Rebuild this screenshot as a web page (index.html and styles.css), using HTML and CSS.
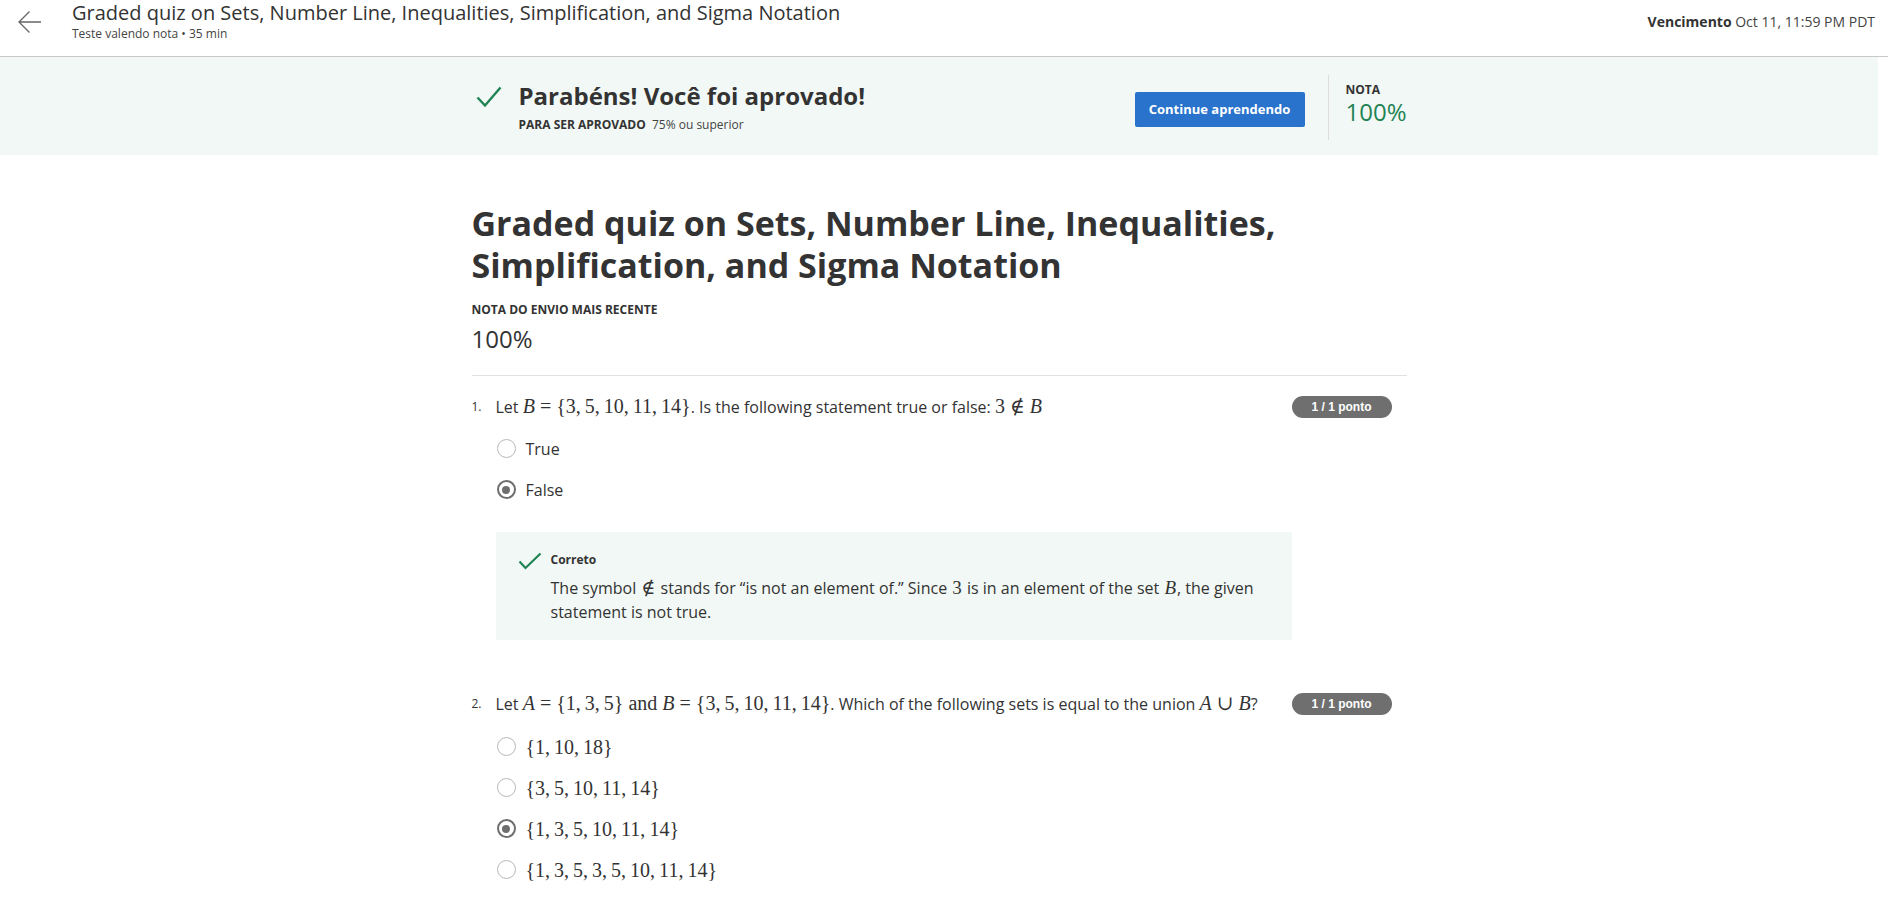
FILE: index.html
```html
<!DOCTYPE html>
<html lang="pt">
<head>
<meta charset="utf-8">
<title>Graded quiz</title>
<link rel="stylesheet" href="styles.css">
</head>
<body>
<header class="topbar">
  <div class="topbar-left">
    <svg class="back" width="24" height="24" viewBox="0 0 24 24" fill="none" stroke="#666" stroke-width="1.3"><path d="M23 12H1.5M11.5 1.5L1 12l10.5 10.5"/></svg>
    <div class="topbar-titles">
      <div class="topbar-title">Graded quiz on Sets, Number Line, Inequalities, Simplification, and Sigma Notation</div>
      <div class="topbar-sub">Teste valendo nota • 35 min</div>
    </div>
  </div>
  <div class="due"><b>Vencimento</b> Oct 11, 11:59 PM PDT</div>
</header>

<div class="page">
  <section class="banner">
    <div class="banner-inner">
      <div class="banner-left">
        <svg class="banner-check" width="26" height="22" viewBox="0 0 26 22" fill="none" stroke="#1f8354" stroke-width="2.4"><path d="M1.5 11.5l7.5 8L24.5 1.5"/></svg>
        <div>
          <div class="banner-title">Parabéns! Você foi aprovado!</div>
          <div class="banner-sub"><b>PARA SER APROVADO</b> 75% ou superior</div>
        </div>
      </div>
      <button class="btn">Continue aprendendo</button>
      <div class="grade">
        <div class="grade-label">NOTA</div>
        <div class="grade-value">100%</div>
      </div>
    </div>
  </section>

  <main class="content">
    <h1 class="quiz-title">Graded quiz on Sets, Number Line, Inequalities, Simplification, and Sigma Notation</h1>
    <div class="recent-label">NOTA DO ENVIO MAIS RECENTE</div>
    <div class="recent-value">100%</div>
    <hr class="divider">

    <div class="question">
      <div class="q-row">
        <span class="q-num">1.</span>
        <div class="q-text">Let <span class="m"><i>B</i> = {3,&thinsp;5,&thinsp;10,&thinsp;11,&thinsp;14}</span>. Is the following statement true or false: <span class="m">3 ∉ <i>B</i></span></div>
        <span class="badge">1 / 1 ponto</span>
      </div>
      <div class="options">
        <div class="opt"><span class="radio"></span><span>True</span></div>
        <div class="opt"><span class="radio on"></span><span>False</span></div>
      </div>
      <div class="feedback">
        <svg class="fb-check" width="24" height="18" viewBox="0 0 24 18" fill="none" stroke="#1f8354" stroke-width="2.2"><path d="M1.5 9.5l6 6.5L22.5 1.5"/></svg>
        <div class="fb-body">
          <div class="fb-label">Correto</div>
          <p class="fb-text">The symbol <span class="m fb-m">∉</span> stands for “is not an element of.” Since <span class="m fb-m">3</span> is in an element of the set <span class="m fb-m"><i>B</i></span>, the given statement is not true.</p>
        </div>
      </div>
    </div>

    <div class="question q2">
      <div class="q-row">
        <span class="q-num">2.</span>
        <div class="q-text">Let <span class="m"><i>A</i> = {1,&thinsp;3,&thinsp;5} and <i>B</i> = {3,&thinsp;5,&thinsp;10,&thinsp;11,&thinsp;14}</span>. Which of the following sets is equal to the union <span class="m"><i>A</i> ∪ <i>B</i></span>?</div>
        <span class="badge">1 / 1 ponto</span>
      </div>
      <div class="options">
        <div class="opt"><span class="radio"></span><span class="m">{1,&thinsp;10,&thinsp;18}</span></div>
        <div class="opt"><span class="radio"></span><span class="m">{3,&thinsp;5,&thinsp;10,&thinsp;11,&thinsp;14}</span></div>
        <div class="opt"><span class="radio on"></span><span class="m">{1,&thinsp;3,&thinsp;5,&thinsp;10,&thinsp;11,&thinsp;14}</span></div>
        <div class="opt"><span class="radio"></span><span class="m">{1,&thinsp;3,&thinsp;5,&thinsp;3,&thinsp;5,&thinsp;10,&thinsp;11,&thinsp;14}</span></div>
      </div>
    </div>
  </main>
</div>
</body>
</html>
```

FILE: styles.css
```css
* { box-sizing: border-box; }
html, body { margin: 0; padding: 0; }
body {
  font-family: "Open Sans", "Noto Sans", sans-serif;
  color: #333;
  background: #fff;
  overflow: hidden;
}

.topbar {
  height: 57px;
  border-bottom: 1px solid #c8c8c8;
  display: flex;
  justify-content: space-between;
  align-items: flex-start;
  padding: 0 13px 0 18px;
}
.topbar-left { display: flex; align-items: flex-start; gap: 30px; }
.back { margin-top: 10px; flex: none; }
.topbar-title { font-size: 20px; line-height: 26px; font-weight: 400; color: #333; }
.topbar-sub { font-size: 12px; line-height: 14px; color: #444; margin-top: 1px; }
.due { font-size: 14px; line-height: 20px; margin-top: 12px; color: #444; }
.due b { font-weight: 700; color: #333; }

.page { margin-right: 10px; }

.banner { background: #f2f8f5; height: 98px; }
.banner-inner {
  width: 935px;
  margin: 0 auto;
  height: 100%;
  display: flex;
  align-items: center;
}
.banner-left { flex: 1; display: flex; align-items: flex-start; gap: 17px; padding-left: 4px; }
.banner-check { margin-top: 6px; flex: none; }
.banner-title { font-size: 24px; line-height: 32px; font-weight: 700; color: #333; }
.banner-sub { font-size: 12px; line-height: 16px; margin-top: 5px; color: #444; }
.banner-sub b { font-size: 12px; font-weight: 700; margin-right: 3px; color: #333; }
.btn {
  width: 170px;
  height: 35px;
  background: #2a73cc;
  border: none;
  border-radius: 2px;
  color: #fff;
  font-family: "Open Sans", sans-serif;
  font-weight: 700;
  font-size: 13px;
  margin-right: 23px;
  margin-top: 6px;
}
.grade {
  border-left: 1px solid #dcdcdc;
  height: 65px;
  padding-left: 17px;
  width: 79px;
  margin-top: 2px;
}
.grade-label { font-size: 12px; line-height: 14px; font-weight: 700; margin-top: 8px; color: #333; }
.grade-value { font-size: 24px; line-height: 30px; color: #1f8354; }

.content { width: 935px; margin: 0 auto; padding-top: 47px; }
.quiz-title {
  margin: 0;
  font-size: 34px;
  line-height: 42px;
  font-weight: 700;
  color: #333;
  width: 880px;
}
.recent-label { font-size: 12px; font-weight: 700; line-height: 16px; margin-top: 16px; color: #333; }
.recent-value { font-size: 24px; line-height: 32px; color: #333; margin-top: 5px; }
.divider { border: 0; border-top: 1px solid #e1e1e1; margin: 20px 0 0; }

.question { margin-top: 19px; }
.q2 { margin-top: 52px; }
.q-row { display: flex; align-items: flex-start; padding-right: 15px; }
.q-num { width: 24px; font-size: 12px; line-height: 24px; flex: none; }
.q-text { flex: 1; font-size: 16px; line-height: 24px; white-space: nowrap; }
.badge {
  flex: none;
  background: #6f6f6f;
  color: #fff;
  font-family: "Liberation Sans", Arial, sans-serif;
  font-weight: 700;
  font-size: 12px;
  height: 22px;
  line-height: 22px;
  width: 100px;
  text-align: center;
  border-radius: 11px;
  margin-top: 1px;
}
.m { font-family: "Liberation Serif", "DejaVu Serif", serif; font-size: 20px; line-height: 1; }
.m i { font-style: italic; }
.fb-m { font-size: 19px; margin: 0 1px; }

.options { padding-left: 25px; margin-top: 9px; }
.q2 .options { margin-top: 10px; }
.opt { display: flex; align-items: center; gap: 10px; height: 41px; font-size: 16px; }
.radio {
  width: 19px; height: 19px;
  border-radius: 50%;
  border: 1.5px solid #b9b9b9;
  flex: none;
  position: relative;
}
.radio.on { border: 2px solid #6e6e6e; }
.radio.on::after {
  content: "";
  position: absolute;
  left: 3.5px; top: 3.5px;
  width: 8px; height: 8px;
  border-radius: 50%;
  background: #6e6e6e;
}

.feedback {
  margin: 22px 0 0 24px;
  width: 796px;
  background: #f2f8f5;
  display: flex;
  gap: 9px;
  padding: 20px 20px 16px 22px;
}
.fb-check { flex: none; margin-top: 0px; }
.fb-body { width: 722px; }
.fb-label { font-size: 12px; line-height: 16px; font-weight: 700; color: #333; }
.fb-text { font-size: 16px; line-height: 24px; margin: 8px 0 0; color: #333; }
```
